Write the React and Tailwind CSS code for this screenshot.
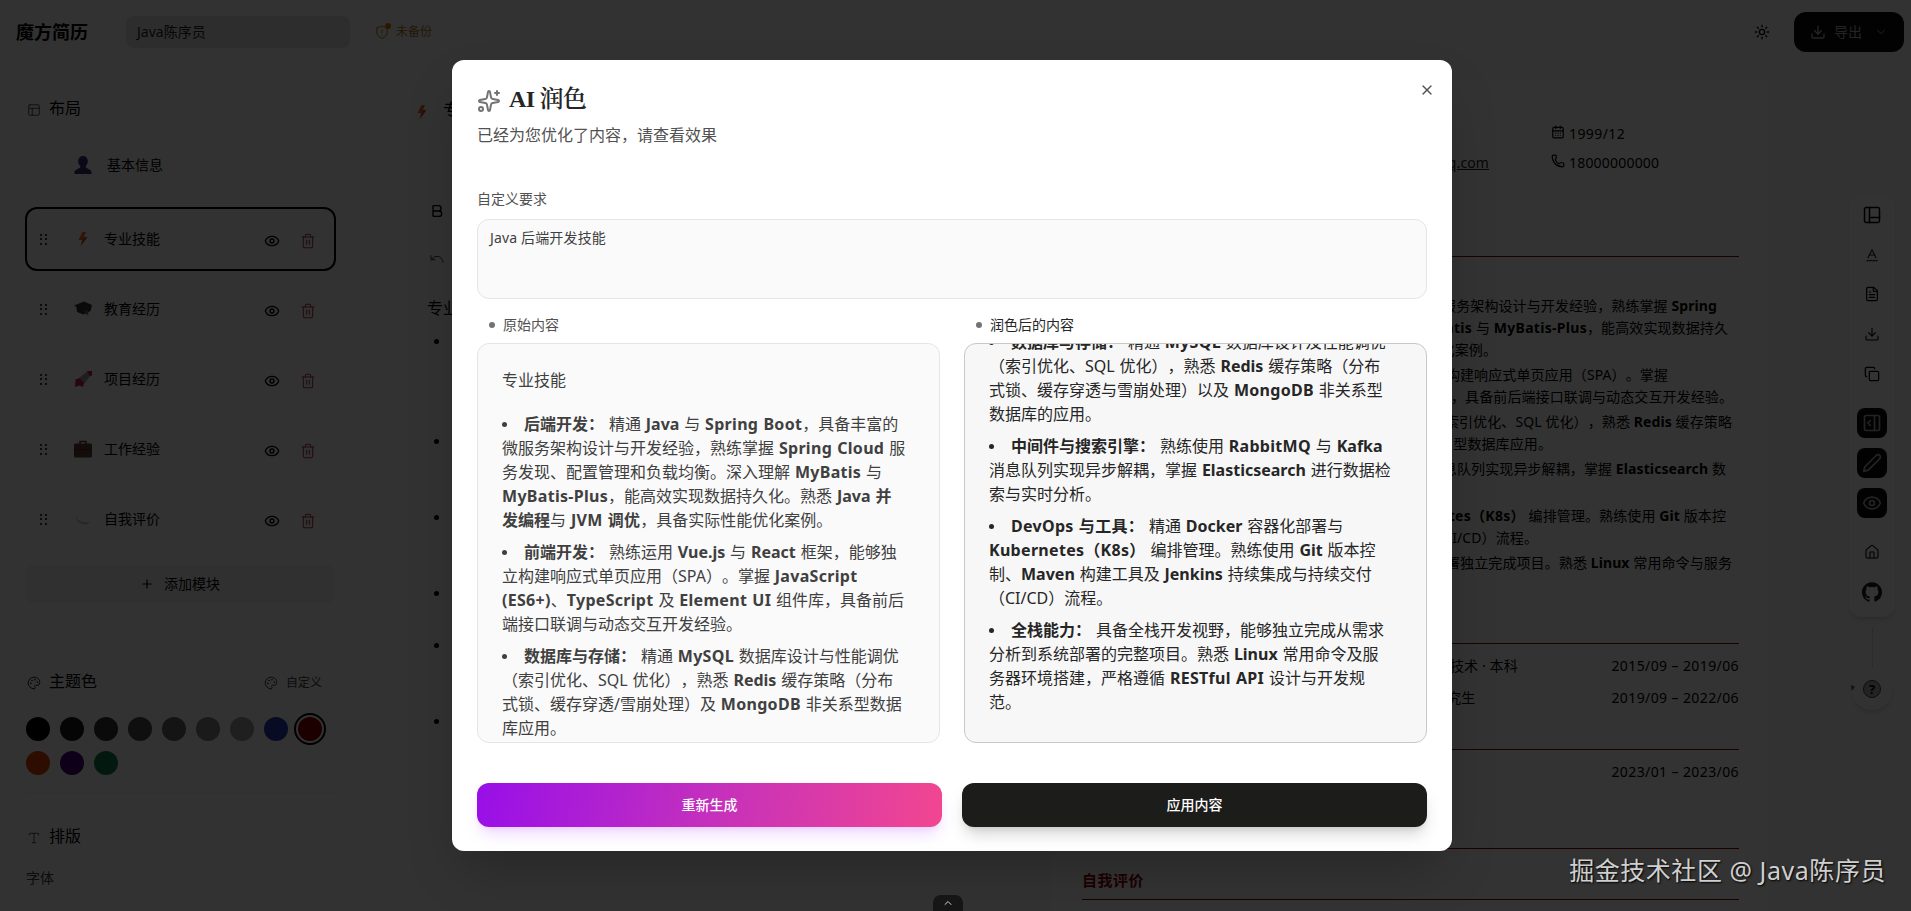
import React from "react";
import {
  Bold,
  CalendarDays,
  ChevronDown,
  ChevronUp,
  Copy,
  Download,
  Eye,
  FileText,
  House,
  Palette,
  PanelRightOpen,
  PanelsLeftBottom,
  PanelsTopLeft,
  Phone,
  Plus,
  Sparkles,
  SpellCheck2,
  Sun,
  Trash2,
  Type,
  Undo,
  X,
} from "lucide-react";
import { SiGithub } from "react-icons/si";

const emojis = {
  user: (
    <svg viewBox="0 0 18 18" className="size-[18px]">
      <path
        d="M9 0c3 0 4.800 2 4.800 5 0 2.200-.8 4-2 5v1.600L17 14.500c.5.800.6 2 .6 3.500H.4c0-1.500.1-2.700.6-3.500l5.200-2.900V10c-1.200-1-2-2.800-2-5 0-3 1.800-5 4.800-5z"
        fill="#3a2a78"
      />
    </svg>
  ),
  bolt: (
    <svg viewBox="0 0 18 18" className="size-[18px]">
      <path d="M8.500 2L4.500 10h3.500l-1 6 6.500-9H9.800L12 2z" fill="#e8652f" />
      <path d="M11.500 2L9.800 7.500H13L6.500 16l3-7z" fill="#c8453c" />
    </svg>
  ),
  cap: (
    <svg viewBox="0 0 18 18" className="size-[18px]">
      <path d="M0 5.500L10 1.500l8 3.500-1.500 6-7 3.500L3 12 2.500 7z" fill="#3a3638" />
      <path d="M11 10l3 1 .5 4.500-3.500-2z" fill="#7a5a58" />
    </svg>
  ),
  rocket: (
    <svg viewBox="0 0 18 18" className="size-[18px]">
      <path d="M5 8L13 1.500l4 3.500-7 9z" fill="#9c9ca4" />
      <path d="M13 1h5v4.500l-2.500.5z" fill="#c32044" />
      <path d="M1.500 9.500l4-1.500 4.500 5-1 4-3.500-1.500L1 17z" fill="#c32044" />
    </svg>
  ),
  bag: (
    <svg viewBox="0 0 18 18" className="size-[18px]">
      <path d="M6 4V1.500h6V4" fill="none" stroke="#53393a" strokeWidth="1.600" />
      <rect x="0" y="3.500" width="18" height="14" rx="1.500" fill="#63393b" />
      <path d="M0 9.500h18" stroke="#4a2628" />
    </svg>
  ),
  chat: (
    <svg viewBox="0 0 18 18" className="size-[18px]">
      <path d="M2 5c0 5 4 8 14 7l-2 2c-8 1-13-2-12-9z" fill="#c2c2c2" />
    </svg>
  ),
};

const menu = [
  { icon: "bolt", name: "专业技能", active: true },
  { icon: "cap", name: "教育经历" },
  { icon: "rocket", name: "项目经历" },
  { icon: "bag", name: "工作经验" },
  { icon: "chat", name: "自我评价" },
];

const colors = [
  "bg-[#000000]",
  "bg-[#1a1a1a]",
  "bg-[#333333]",
  "bg-[#4d4d4d]",
  "bg-[#666666]",
  "bg-[#808080]",
  "bg-[#999999]",
  "bg-[#2438b0]",
  "bg-[#8b0000]",
  "bg-[#e04000]",
  "bg-[#4b0082]",
  "bg-[#107b4c]",
];

// **text** marks the bold parts of a line
const original = [
  [
    "**后端开发：** 精通 **Java** 与 **Spring Boot**，具备丰富的",
    "微服务架构设计与开发经验，熟练掌握 **Spring Cloud** 服",
    "务发现、配置管理和负载均衡。深入理解 **MyBatis** 与",
    "**MyBatis-Plus**，能高效实现数据持久化。熟悉 **Java 并**",
    "**发编程**与 **JVM 调优**，具备实际性能优化案例。",
  ],
  [
    "**前端开发：** 熟练运用 **Vue.js** 与 **React** 框架，能够独",
    "立构建响应式单页应用（SPA）。掌握 **JavaScript**",
    "**(ES6+)**、**TypeScript** 及 **Element UI** 组件库，具备前后",
    "端接口联调与动态交互开发经验。",
  ],
  [
    "**数据库与存储：** 精通 **MySQL** 数据库设计与性能调优",
    "（索引优化、SQL 优化），熟悉 **Redis** 缓存策略（分布",
    "式锁、缓存穿透/雪崩处理）及 **MongoDB** 非关系型数据",
    "库应用。",
  ],
];

const polished = [
  [
    "**数据库与存储：** 精通 **MySQL** 数据库设计及性能调优",
    "（索引优化、SQL 优化），熟悉 **Redis** 缓存策略（分布",
    "式锁、缓存穿透与雪崩处理）以及 **MongoDB** 非关系型",
    "数据库的应用。",
  ],
  [
    "**中间件与搜索引擎：** 熟练使用 **RabbitMQ** 与 **Kafka**",
    "消息队列实现异步解耦，掌握 **Elasticsearch** 进行数据检",
    "索与实时分析。",
  ],
  [
    "**DevOps 与工具：** 精通 **Docker** 容器化部署与",
    "**Kubernetes（K8s）** 编排管理。熟练使用 **Git** 版本控",
    "制、**Maven** 构建工具及 **Jenkins** 持续集成与持续交付",
    "（CI/CD）流程。",
  ],
  [
    "**全栈能力：** 具备全栈开发视野，能够独立完成从需求",
    "分析到系统部署的完整项目。熟悉 **Linux** 常用命令及服",
    "务器环境搭建，严格遵循 **RESTful API** 设计与开发规",
    "范。",
  ],
];

const resume = [
  { css: "pr-[22px]", text: "微服务架构设计与开发经验，熟练掌握 **Spring**" },
  { css: "pr-[11px]", text: "**MyBatis** 与 **MyBatis-Plus**，能高效实现数据持久" },
  { css: "pr-[242px]", text: "具备实际性能优化案例。" },
  { css: "pr-[71px] mt-[3px]", text: "能够独立构建响应式单页应用（SPA）。掌握" },
  { css: "pr-[6px]", text: "组件库，具备前后端接口联调与动态交互开发经验。" },
  { css: "pr-[7px] mt-[3px]", text: "（索引优化、SQL 优化），熟悉 **Redis** 缓存策略" },
  { css: "pr-[187px]", text: "**MongoDB** 非关系型数据库应用。" },
  { css: "pr-[13px] mt-[3px]", text: "消息队列实现异步解耦，掌握 **Elasticsearch** 数" },
  { css: "mt-[25px] pr-[13px]", text: "**Kubernetes（K8s）** 编排管理。熟练使用 **Git** 版本控" },
  { css: "pr-[201px]", text: "（CI/CD）流程。" },
  { css: "pr-[7px] mt-[3px]", text: "能够部署独立完成项目。熟悉 **Linux** 常用命令与服务" },
];

const rich = (text) =>
  text.split("**").map((part, i) =>
    i % 2 ? (
      <strong
        key={i}
        className={/[A-Z].*[A-Z]/.test(part) ? "font-bold tracking-[0.3px]" : "font-bold"}
      >
        {part}
      </strong>
    ) : (
      <span key={i}>{part}</span>
    )
  );

const SkillList = ({ groups }) => (
  <ul className="space-y-2 [word-spacing:0.7px]">
    {groups.map((lines, i) => (
      <li key={i}>
        {lines.map((line, j) => (
          <div key={j} className="flex h-6 items-center whitespace-pre leading-6">
            {j === 0 && <span className="mr-[17px] size-[5px] rounded-full bg-current" />}
            <span>{rich(line)}</span>
          </div>
        ))}
      </li>
    ))}
  </ul>
);

const DragHandle = () => (
  <span className="grid grid-cols-2 gap-x-[3px] gap-y-[2.500px]">
    {[0, 1, 2, 3, 4, 5].map((n) => (
      <span key={n} className="size-[2px] rounded-full bg-black" />
    ))}
  </span>
);

const Header = () => (
  <header className="flex h-16 items-center pl-4 pr-[7px]">
    <h1 className="w-[110px] text-[18px] font-bold text-black">魔方简历</h1>
    <div className="flex h-8 w-[224px] items-center rounded-lg bg-[#dedede] pl-[11px] text-sm text-[#262626]">
      Java陈序员
    </div>
    <div className="relative ml-[25px] flex items-center gap-[7px] text-xs text-[#b0741a]">
      <svg viewBox="0 0 14 14" className="size-[14px]" fill="none" stroke="currentColor">
        <path d="M7 1c1.500 1 3.500 1.500 5.200 1.500V7c0 3.500-2.200 5.300-5.200 6.300C4 12.300 1.800 10.500 1.800 7V2.500C3.500 2.500 5.500 2 7 1zM7 4.500V8M7 9.500v.8" />
      </svg>
      <span className="absolute left-[10px] -top-px size-1.5 rounded-full bg-[#d97706]" />
      未备份
    </div>
    <div className="ml-auto flex items-center">
      <Sun className="mr-6 size-4 text-black" />
      <button className="flex h-10 w-[110px] items-center rounded-xl bg-[#0a0a0a] pl-4 text-sm text-[#b4b4b4]">
        <Download className="mr-2 size-4" />
        导出
        <ChevronDown className="ml-3 size-3.5 text-[#6a6a6a]" />
      </button>
    </div>
  </header>
);

const Sidebar = () => (
  <aside className="w-[404px] shrink-0 pl-[25px] text-[#000]">
    <div className="w-[311px]">
      <div className="mt-[32px] flex h-6 items-center gap-2 pl-[2px] text-base">
        <PanelsTopLeft className="mt-1 size-[14px] text-[#404040]" strokeWidth={1.5} />
        布局
      </div>
      <div className="mt-[17px] mb-[14px] flex h-14 items-center pl-[49px] text-sm">
        {emojis.user}
        <span className="ml-[15px]">基本信息</span>
      </div>
      <div className="flex flex-col gap-1.5">
        {menu.map((item) => (
          <div
            key={item.name}
            className={
              item.active
                ? "flex h-16 items-center rounded-xl border-2 border-black pl-[13px] text-sm"
                : "flex h-16 items-center rounded-xl border-2 border-transparent pl-[13px] text-sm"
            }
          >
            <DragHandle />
            <span className="ml-[27px] mr-3">{emojis[item.icon]}</span>
            {item.name}
            <Eye className="ml-auto mt-[3px] size-4" />
            <Trash2 className="ml-5 mr-[18px] mt-[3px] size-4 text-[#a93a42]" strokeWidth={1.6} />
          </div>
        ))}
      </div>
      <button className="mt-[14px] flex h-[38px] w-[310px] items-center justify-center gap-[10px] rounded-lg bg-[#f0f0f0] text-sm">
        <Plus className="size-3.5" />
        添加模块
      </button>
      <div className="mt-[66px] flex h-6 items-center pl-[2px] text-base">
        <Palette className="mr-2 mt-[3px] size-[14px] text-[#262626]" strokeWidth={1.7} />
        主题色
        <span className="ml-auto mt-[3px] flex items-center gap-2 pr-[14px] text-xs text-[#404040]">
          <Palette className="size-[14px]" strokeWidth={1.7} />
          自定义
        </span>
      </div>
      <div className="mt-[24px] grid grid-cols-[repeat(9,24px)] gap-[10px] pl-[1px]">
        {colors.map((c) => (
          <span
            key={c}
            className={
              c === "bg-[#8b0000]"
                ? `${c} size-6 rounded-full outline-2 outline-offset-2 outline-black`
                : `${c} size-6 rounded-full`
            }
          />
        ))}
      </div>
      <div className="mt-[17px] h-px bg-[#f0f0f0]" />
      <div className="mt-[31px] flex h-6 items-center gap-2 pl-[2px] text-base">
        <Type className="mt-[3px] size-[14px] text-[#404040]" strokeWidth={1.5} />
        排版
      </div>
      <div className="mt-[20px] pl-[1px] text-sm text-[#404040]">字体</div>
    </div>
  </aside>
);

const Editor = () => (
  <section className="w-[646px] shrink-0 text-black">
    <div className="mt-[34px] flex h-7 items-center pl-[9px] text-lg">
      {emojis.bolt}
      <span className="ml-[12px] -mt-1">专业技能</span>
    </div>
    <Bold className="ml-[25px] mt-[77px] size-4" />
    <Undo className="ml-[25px] mt-[32px] size-4 text-[#404040]" strokeWidth={1.5} />
    <div className="mt-[29px] pl-[23px] text-base leading-6">专业技能</div>
    <ul className="flex flex-col pl-[30px]">
      {["mt-[19px]", "mt-[95px]", "mt-[71px]", "mt-[71px]", "mt-[47px]", "mt-[71px]"].map((m, i) => (
        <li key={i} className={`${m} size-[5px] rounded-full bg-black`} />
      ))}
    </ul>
  </section>
);

const Resume = () => (
  <section className="mt-[15px] h-[832px] w-[718px] shrink-0 bg-white pl-[32px] pr-[29px] text-sm tracking-[0.1px] text-[#000]">
    <div className="grid grid-cols-[469px_1fr] gap-y-1 pt-[42px] leading-[25px]">
      <span />
      <span className="flex items-center gap-1 tracking-[0.4px]">
        <CalendarDays className="-mt-1 size-[14px]" />
        1999/12
      </span>
      <span className="pr-[62px] text-right text-[#262626] underline">java@qq.com</span>
      <span className="flex items-center gap-1 tracking-[0.2px]">
        <Phone className="-mt-1 size-[14px]" />
        18000000000
      </span>
    </div>
    <hr className="mt-[81px] border-[#8b0000]" />
    <div className="pt-[38px]">
      {resume.map((row) => (
        <div key={row.text} className={`${row.css} h-[22px] whitespace-pre text-right leading-[22px]`}>
          {rich(row.text)}
        </div>
      ))}
    </div>
    <hr className="mt-[69px] border-[#8b0000]" />
    <div className="flex pt-[11px] leading-[22px]">
      <span className="mr-auto pl-[368px]">技术 · 本科</span>
      <span className="tracking-[0.4px]">2015/09 – 2019/06</span>
    </div>
    <div className="flex pt-[10px] leading-[22px]">
      <span className="mr-auto pl-[351px]">研究生</span>
      <span className="tracking-[0.4px]">2019/09 – 2022/06</span>
    </div>
    <hr className="mt-[40px] border-[#8b0000]" />
    <div className="pt-[11px] text-right leading-[22px] tracking-[0.4px]">2023/01 – 2023/06</div>
    <hr className="mt-[65px] border-[#8b0000]" />
    <h3 className="mt-[20px] text-[15px] font-bold leading-[22px] tracking-[0.5px] text-[#8b0000]">自我评价</h3>
    <hr className="mt-[8px] border-[#8b0000]" />
  </section>
);

const Dock = () => (
  <div className="absolute left-[1849px] top-[194px] flex w-[46px] flex-col items-center text-black">
    <div className="flex h-[423px] w-full flex-col items-center rounded-xl bg-[#fefefe] shadow-md">
      <PanelsLeftBottom className="mt-[11px] size-5" strokeWidth={1.8} />
      <SpellCheck2 className="mt-[22px] size-4 text-[#1a1a1a]" strokeWidth={1.6} />
      <FileText className="mt-[23px] size-4" strokeWidth={1.8} />
      <Download className="mt-[24px] size-4" strokeWidth={1.6} />
      <Copy className="mt-[24px] size-4" strokeWidth={1.8} />
      <span className="mt-[26px] flex size-[30px] items-center justify-center rounded-lg bg-[#0a0a0a] text-[#b0b0b0]">
        <PanelRightOpen className="size-5" />
      </span>
      <span className="mt-[10px] flex size-[30px] items-center justify-center rounded-lg bg-[#0a0a0a] text-[#b0b0b0]">
        <svg viewBox="0 0 24 24" className="size-5" fill="none" stroke="currentColor" strokeWidth="2" strokeLinejoin="round">
          <path d="M17 3a2.850 2.830 0 1 1 4 4L7.500 20.500 2 22l1.500-5.500Z" />
        </svg>
      </span>
      <span className="mt-[10px] flex size-[30px] items-center justify-center rounded-lg bg-[#0a0a0a] text-[#b0b0b0]">
        <Eye className="size-5" />
      </span>
      <House className="mt-[26px] size-4" strokeWidth={1.6} />
      <SiGithub className="mt-[22px] size-5 shrink-0 text-[#1a1a1a]" />
    </div>
    <span className="mt-[10px] h-[40px] w-px bg-[#d4d4d4]" />
    <span className="relative mt-px flex size-[42px] items-center justify-center rounded-full bg-[#f8f8f8] shadow-md">
      <span className="absolute left-0 top-[17px] h-1.5 w-1 bg-[#606060] [clip-path:polygon(0_0,100%_30%,20%_100%)]" />
      <span className="flex size-[18px] items-center justify-center rounded-full border border-[#404040] bg-[#b0b0b0] text-[13px] font-bold leading-none">
        ?
      </span>
    </span>
  </div>
);

const PolishDialog = () => (
  <div className="absolute left-[452px] top-[60px] flex h-[791px] w-[1000px] flex-col rounded-xl bg-white px-[25px] text-[#404040] shadow-2xl">
    <X className="absolute right-[17px] top-[22px] size-4 text-[#525252]" />
    <h2 className="mt-[25px] flex h-8 items-center gap-2 font-['Liberation_Serif','Noto_Serif_CJK_SC','Noto_Sans_CJK_SC',serif] text-2xl font-semibold tracking-[-0.7px] text-[#262626]">
      <Sparkles className="size-6 text-[#737373]" />
      <span className="-mt-1">AI 润色</span>
    </h2>
    <p className="mt-[6px] text-base leading-6 text-[#525252]">已经为您优化了内容，请查看效果</p>
    <label className="mt-[42px] text-sm leading-5 text-[#525252]">自定义要求</label>
    <div className="mt-[10px] h-20 shrink-0 rounded-xl border border-[#e5e5e5] bg-[#fafafa] px-3 py-[8px] text-sm leading-5 tracking-[0.15px]">
      Java 后端开发技能
    </div>
    <div className="mt-4 grid grid-cols-2 gap-6">
      <div>
        <div className="flex h-5 items-center gap-2 pl-3 text-sm text-[#525252]">
          <span className="size-1.5 rounded-full bg-[#737373]" />
          原始内容
        </div>
        <div className="mt-2 h-[400px] overflow-hidden rounded-xl border border-[#e5e5e5] bg-[#fafafa] px-6 pt-6 text-base">
          <p className="mb-[20px] leading-6">专业技能</p>
          <SkillList groups={original} />
        </div>
      </div>
      <div>
        <div className="flex h-5 items-center gap-2 pl-3 text-sm text-[#262626]">
          <span className="size-1.5 rounded-full bg-[#737373]" />
          润色后的内容
        </div>
        <div className="mt-2 h-[400px] overflow-hidden rounded-xl border border-[#c8c8c8] bg-[#f7f7f7] px-6 text-base text-[#262626]">
          <div className="-mt-[14px]">
            <SkillList groups={polished} />
          </div>
        </div>
      </div>
    </div>
    <div className="mt-[40px] grid grid-cols-2 gap-5 text-sm font-medium text-white">
      <button className="h-11 rounded-xl bg-linear-[100deg] from-[#980fe8] via-[#c430bd] to-[#f24690] shadow-lg shadow-purple-500/20">
        重新生成
      </button>
      <button className="h-11 rounded-xl bg-[#1c1c1a] shadow-lg shadow-neutral-500/30">应用内容</button>
    </div>
  </div>
);

const App = () => {
  return (
    <div className="relative h-[911px] w-[1911px] overflow-hidden bg-[#fafafa] font-['Noto_Sans','Noto_Sans_CJK_SC',sans-serif] [text-spacing-trim:space-all]">
      <Header />
      <main className="flex">
        <Sidebar />
        <Editor />
        <Resume />
      </main>
      <Dock />
      <div className="absolute inset-0 bg-black/80" />
      <div className="absolute bottom-0 left-[933px] flex h-4 w-[30px] items-center justify-center rounded-t-lg bg-[#171717] text-[#d4d4d4]">
        <ChevronUp className="size-3" />
      </div>
      <PolishDialog />
      <div className="absolute bottom-[21px] right-[25px] whitespace-pre text-[25px] leading-10 tracking-[0.55px] text-[#cfcfcf] [text-shadow:1px_1px_2px_#000]">
        掘金技术社区 @ Java陈序员
      </div>
    </div>
  );
};

export default App;
